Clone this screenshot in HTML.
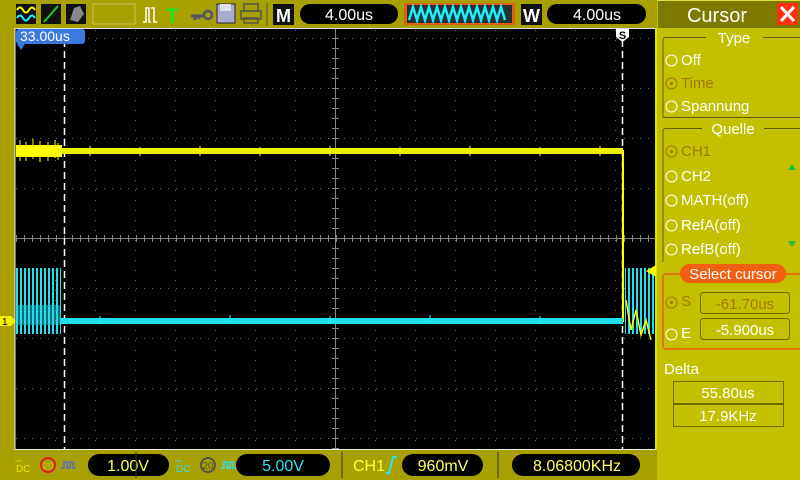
<!DOCTYPE html>
<html><head><meta charset="utf-8"><style>
html,body{margin:0;padding:0;background:#a8a000;}
svg{display:block;font-family:"Liberation Sans",sans-serif;}
</style></head><body>
<svg width="800" height="480" viewBox="0 0 800 480" xmlns="http://www.w3.org/2000/svg">
<defs>
<pattern id="gv" x="15" y="0" width="40" height="10" patternUnits="userSpaceOnUse"><rect x="0" y="0" width="1" height="1" fill="#666"/></pattern>
<pattern id="gh" x="0" y="38" width="8" height="50" patternUnits="userSpaceOnUse"><rect x="0" y="0" width="1" height="1" fill="#666"/></pattern>
<pattern id="cb" x="0" y="0" width="4" height="10" patternUnits="userSpaceOnUse"><rect x="0" y="0" width="2" height="10" fill="#20e0f0"/></pattern>
</defs>
<rect width="800" height="480" fill="#a8a000"/>
<rect x="16" y="4" width="20" height="20" fill="#111"/>
<path d="M17 10 q3 -5 6 0 t6 0 t6 0" stroke="#ff0" stroke-width="2" fill="none"/>
<path d="M17 18 q3 -5 6 0 t6 0 t6 0" stroke="#2ef" stroke-width="2" fill="none"/>
<rect x="41" y="4" width="20" height="20" fill="#111"/>
<path d="M44 22 L58 6" stroke="#2c2" stroke-width="2"/>
<rect x="66" y="4" width="20" height="20" fill="#111"/>
<path d="M70 20 L74 8 L80 6 L84 14 L78 22 Z" fill="#888"/>
<rect x="93" y="4" width="42" height="20" fill="none" stroke="#c8c060" stroke-width="1"/>
<path d="M143 22 h3 v-14 h3 v14 h2 M151 8 h3 v14 h3" stroke="#fff" stroke-width="1.5" fill="none"/>
<text x="166" y="23" font-size="21" font-weight="bold" fill="#22e022">T</text>
<path d="M191 16 h14 M195 16 v4 M199 16 v3" stroke="#556" stroke-width="3"/>
<circle cx="208" cy="15" r="4" fill="none" stroke="#556" stroke-width="2.5"/>
<rect x="217" y="4" width="18" height="19" fill="#aac" stroke="#224" stroke-width="1"/>
<rect x="220" y="4" width="11" height="7" fill="#dde"/>
<rect x="244" y="4" width="14" height="7" fill="none" stroke="#554" stroke-width="1.5"/>
<rect x="241" y="11" width="20" height="8" fill="none" stroke="#554" stroke-width="1.5"/>
<rect x="244" y="18" width="14" height="5" fill="none" stroke="#554" stroke-width="1.5"/>
<line x1="267" y1="3" x2="267" y2="26" stroke="#554" stroke-width="1"/>
<rect x="273" y="4" width="21" height="21" fill="#111"/>
<text x="276" y="22" font-size="18" font-weight="bold" fill="#fff">M</text>
<rect x="300" y="4" width="98" height="20" rx="10" fill="#000"/>
<text x="349" y="20" font-size="16" fill="#fff" text-anchor="middle">4.00us</text>
<rect x="404" y="3" width="111" height="22" fill="#e06010"/>
<rect x="407" y="5" width="105" height="18" fill="#233"/>
<path d="M409 20 l4 -13 l4 13 l4 -13 l4 13 l4 -13 l4 13 l4 -13 l4 13 l4 -13 l4 13 l4 -13 l4 13 l4 -13 l4 13 l4 -13 l4 13 l4 -13 l4 13 l4 -13 l4 13 l4 -13 l4 13 l4 -13 l4 13" stroke="#2ef" stroke-width="2.5" fill="none"/>
<rect x="521" y="4" width="21" height="21" fill="#111"/>
<text x="523" y="22" font-size="18" font-weight="bold" fill="#fff">W</text>
<rect x="547" y="4" width="99" height="20" rx="10" fill="#000"/>
<text x="597" y="20" font-size="16" fill="#fff" text-anchor="middle">4.00us</text>
<rect x="15" y="28" width="641" height="422" fill="#000"/>
<line x1="15" y1="28" x2="15" y2="450" stroke="#eee" stroke-width="1"/>
<line x1="15" y1="28.5" x2="656" y2="28.5" stroke="#ddd" stroke-width="1"/>
<line x1="656" y1="28" x2="656" y2="450" stroke="#e0e000" stroke-width="2"/>
<line x1="15" y1="449.5" x2="656" y2="449.5" stroke="#eee" stroke-width="1"/>
<rect x="15" y="30" width="640" height="418" fill="url(#gv)"/>
<rect x="15" y="30" width="640" height="418" fill="url(#gh)"/>
<line x1="15" y1="238.5" x2="655" y2="238.5" stroke="#888" stroke-width="1"/>
<line x1="335.5" y1="29" x2="335.5" y2="449" stroke="#888" stroke-width="1"/>
<path d="M15 238.5 H655" stroke="#888" stroke-width="7" stroke-dasharray="1 7" stroke-dashoffset="-1"/>
<path d="M335.5 29 V449" stroke="#888" stroke-width="7" stroke-dasharray="1 9" stroke-dashoffset="-9"/>
<line x1="64.5" y1="40" x2="64.5" y2="449" stroke="#fff" stroke-width="1.5" stroke-dasharray="7 4"/>
<line x1="622.5" y1="40" x2="622.5" y2="449" stroke="#fff" stroke-width="1.5" stroke-dasharray="7 4"/>
<rect x="16" y="145" width="46" height="12" fill="#ff0"/>
<path d="M20 140v21M26 142v19M33 139v20M40 141v21M48 142v19M55 140v18M58 143v17" stroke="#ff0" stroke-width="1"/>
<rect x="62" y="148" width="561" height="6" fill="#ee0"/>
<path d="M90 146v10M140 147v9M200 146v10M260 147v9M330 146v10M400 147v9M470 146v10M540 147v9M600 146v10" stroke="#ff0" stroke-width="1"/>
<line x1="623" y1="150" x2="623" y2="322" stroke="#ff0" stroke-width="2"/>
<rect x="16" y="268" width="45" height="66" fill="url(#cb)"/>
<rect x="16" y="305" width="45" height="20" fill="#20d8e8" opacity="0.5"/>
<rect x="61" y="318" width="562" height="6" fill="#20e0f0"/>
<path d="M100 316v8M230 315v9M330 316v8M430 315v9M540 316v8" stroke="#2ef" stroke-width="1"/>
<rect x="625" y="268" width="30" height="66" fill="url(#cb)"/>
<path d="M626 300 l5 30 l5 -20 l5 25 l5 -15 l5 20" stroke="#ff0" stroke-width="1.5" fill="none"/>
<path d="M646 271 L656 265 L656 277 Z" fill="#ff0"/>
<path d="M0 316 h11 l5 5 l-5 5 h-11 Z" fill="#ee0"/>
<text x="2" y="325" font-size="10" fill="#000">1</text>
<rect x="16" y="29" width="69" height="15" rx="3" fill="#3a7ae0"/>
<path d="M17 44 l4 6 l4 -6 Z" fill="#3a7ae0"/>
<text x="20" y="41" font-size="14" fill="#fff">33.00us</text>
<path d="M616 29 h13 v8 l-6.5 5 l-6.5 -5 Z" fill="#fff"/>
<text x="622.5" y="39" font-size="11" font-weight="bold" fill="#000" text-anchor="middle">S</text>
<text x="15" y="464" font-size="9" fill="#e8e000">⎓</text>
<text x="16" y="472" font-size="10" fill="#e8e000">DC</text>
<circle cx="48" cy="465" r="7" fill="none" stroke="#e02020" stroke-width="2"/>
<text x="48" y="469" font-size="10" fill="#d0c000" text-anchor="middle">20</text>
<path d="M61 468 h3 v-6 h3 v6 h3 v-6 h3 v6 h3" stroke="#6068d0" stroke-width="1.5" fill="none"/>
<rect x="88" y="454" width="81" height="22" rx="11" fill="#000"/>
<text x="128" y="471" font-size="16" fill="#ffff60" text-anchor="middle">1.00V</text>
<line x1="136" y1="452" x2="136" y2="478" stroke="#333" stroke-width="1"/>
<text x="175" y="464" font-size="9" fill="#30e0f0">⎓</text>
<text x="176" y="472" font-size="10" fill="#30e0f0">DC</text>
<circle cx="208" cy="465" r="7" fill="none" stroke="#554" stroke-width="2"/>
<text x="208" y="469" font-size="10" fill="#554" text-anchor="middle">20</text>
<path d="M221 468 h3 v-6 h3 v6 h3 v-6 h3 v6 h3" stroke="#30e0f0" stroke-width="1.5" fill="none"/>
<rect x="236" y="454" width="94" height="22" rx="11" fill="#000"/>
<text x="283" y="471" font-size="16" fill="#30e0f0" text-anchor="middle">5.00V</text>
<line x1="342" y1="452" x2="342" y2="478" stroke="#333" stroke-width="1"/>
<text x="353" y="471" font-size="16" fill="#ffff30">CH1</text>
<path d="M386 473 h3 l4 -16 h4" stroke="#30e0f0" stroke-width="2" fill="none"/>
<rect x="402" y="454" width="81" height="22" rx="11" fill="#000"/>
<text x="443" y="471" font-size="16" fill="#ffff60" text-anchor="middle">960mV</text>
<line x1="498" y1="452" x2="498" y2="478" stroke="#333" stroke-width="1"/>
<rect x="512" y="454" width="128" height="22" rx="11" fill="#000"/>
<text x="577" y="471" font-size="16" fill="#ffff60" text-anchor="middle">8.06800KHz</text>
<rect x="657" y="0" width="143" height="480" fill="#c4c000"/>
<rect x="658" y="1" width="142" height="27" fill="#7e7a00"/>
<line x1="657" y1="0.5" x2="800" y2="0.5" stroke="#e0e040"/>
<text x="717" y="22" font-size="20" fill="#fff" text-anchor="middle">Cursor</text>
<rect x="777" y="3" width="21" height="22" fill="#ff3010"/>
<path d="M781 7 l13 14 M794 7 l-13 14" stroke="#fff" stroke-width="3"/>
<path d="M663 117 v-77 q0 -2.5 3 -2.5 h40 M763 37.5 h37" stroke="#5e5a00" fill="none"/>
<line x1="663" y1="117.5" x2="800" y2="117.5" stroke="#5e5a00"/>
<text x="734" y="43" font-size="15" fill="#fff" text-anchor="middle">Type</text>
<g font-size="15" fill="#fff">
<circle cx="671.5" cy="60.5" r="5.5" fill="none" stroke="#fff" stroke-width="1"/>
<text x="681" y="65">Off</text>
<circle cx="671.5" cy="83.5" r="5.5" fill="none" stroke="#a07800" stroke-width="1"/>
<circle cx="671.5" cy="83.5" r="1.5" fill="#a07800"/>
<text x="681" y="88" fill="#a07800">Time</text>
<circle cx="671.5" cy="106.5" r="5.5" fill="none" stroke="#fff" stroke-width="1"/>
<text x="681" y="111">Spannung</text>
</g>
<path d="M663 262 V131 q0 -2.5 3 -2.5 h36 M764 128.5 h36" stroke="#5e5a00" fill="none"/>
<text x="733" y="134" font-size="15" fill="#fff" text-anchor="middle">Quelle</text>
<g font-size="15" fill="#fff">
<circle cx="671.5" cy="151.5" r="5.5" fill="none" stroke="#a07800" stroke-width="1"/>
<circle cx="671.5" cy="151.5" r="1.5" fill="#a07800"/>
<text x="681" y="156" fill="#a07800">CH1</text>
<circle cx="671.5" cy="176.5" r="5.5" fill="none" stroke="#fff" stroke-width="1"/>
<text x="681" y="181">CH2</text>
<circle cx="671.5" cy="200.5" r="5.5" fill="none" stroke="#fff" stroke-width="1"/>
<text x="681" y="205">MATH(off)</text>
<circle cx="671.5" cy="225.5" r="5.5" fill="none" stroke="#fff" stroke-width="1"/>
<text x="681" y="230">RefA(off)</text>
<circle cx="671.5" cy="249.5" r="5.5" fill="none" stroke="#fff" stroke-width="1"/>
<text x="681" y="254">RefB(off)</text>
</g>
<path d="M788 170 l4 -6 l4 6 Z" fill="#20c040"/>
<path d="M788 241 l4 6 l4 -6 Z" fill="#20c040"/>
<rect x="663" y="274" width="140" height="75" rx="3" fill="none" stroke="#e86010" stroke-width="1.5"/>
<rect x="680" y="264" width="106" height="19" rx="9.5" fill="#f06010"/>
<text x="733" y="279" font-size="15" fill="#fff" text-anchor="middle">Select  cursor</text>
<circle cx="671.5" cy="302.5" r="5.5" fill="none" stroke="#a07800" stroke-width="1"/>
<circle cx="671.5" cy="302.5" r="1.5" fill="#a07800"/>
<text x="681" y="306" font-size="15" fill="#a07800">S</text>
<rect x="700.5" y="292.5" width="89" height="21" rx="3" fill="none" stroke="#6e6a00"/>
<text x="745" y="309" font-size="15" fill="#a07800" text-anchor="middle">-61.70us</text>
<circle cx="671.5" cy="334.5" r="5.5" fill="none" stroke="#fff" stroke-width="1"/>
<text x="681" y="338" font-size="15" fill="#fff">E</text>
<rect x="700.5" y="318.5" width="89" height="21" rx="3" fill="none" stroke="#6e6a00"/>
<text x="745" y="335" font-size="15" fill="#fff" text-anchor="middle">-5.900us</text>
<text x="664" y="374" font-size="15" fill="#fff">Delta</text>
<rect x="673.5" y="381.5" width="110" height="22" fill="none" stroke="#6e6a00"/>
<rect x="673.5" y="404.5" width="110" height="22" fill="none" stroke="#6e6a00"/>
<text x="728" y="398" font-size="15" fill="#fff" text-anchor="middle">55.80us</text>
<text x="728" y="421" font-size="15" fill="#fff" text-anchor="middle">17.9KHz</text>
</svg>
</body></html>
